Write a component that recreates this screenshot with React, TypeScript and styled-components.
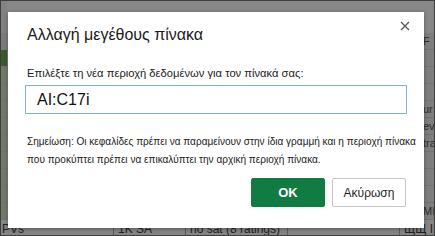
import React from "react";
import styled, { createGlobalStyle } from "styled-components";

const GlobalStyle = createGlobalStyle`
  html, body {
    margin: 0;
    padding: 0;
  }
  body {
    font-family: "Liberation Sans", Arial, sans-serif;
  }
`;

const Screen = styled.div`
  position: relative;
  width: 435px;
  height: 236px;
  box-sizing: border-box;
  border: 1px solid #3e3e3e;
  background: #878787;
  overflow: hidden;
`;

const Sheet = styled.div`
  display: grid;
  grid-template-columns: 6px 1fr 11px;
  grid-template-rows: 32px 17px 17px repeat(9, 17px);
  height: 100%;
`;

const Cell = styled.div<{ $tone?: string; $line?: boolean }>`
  background: ${(p) => p.$tone || "#868686"};
  border-bottom: ${(p) => (p.$line ? "1px solid #727272" : "none")};
  box-sizing: border-box;
  font-size: 11px;
  color: #2a2a2a;
  overflow: hidden;
  white-space: nowrap;
  line-height: 16px;
`;

const BottomRow = styled.div`
  position: absolute;
  left: 0;
  right: 0;
  bottom: 0;
  height: 12px;
  display: grid;
  grid-template-columns: 112px 72px 102px 112px 1fr;
  background: #858585;
  font-size: 12px;
  color: #222;
  line-height: 12px;
`;

const BottomCell = styled.div`
  padding-left: 4px;
  border-left: 1px solid #5a5a5a;
  overflow: hidden;
  white-space: nowrap;
  &:first-child {
    border-left: none;
    padding-left: 1px;
  }
`;

const Dialog = styled.div`
  position: absolute;
  left: 7px;
  top: 11px;
  width: 416px;
  height: 216px;
  box-sizing: border-box;
  background: #ffffff;
  box-shadow: 0 1px 4px rgba(0, 0, 0, 0.35);
  padding: 12px 17px 0 19px;
  display: flex;
  flex-direction: column;
  color: #1f1f1f;
`;

const Close = styled.div`
  position: absolute;
  right: 13px;
  top: 8px;
  width: 12px;
  height: 12px;
  display: flex;
  align-items: center;
  justify-content: center;
`;

const Title = styled.div`
  font-size: 16px;
  line-height: 22px;
  color: #1b1b1b;
`;

const Label = styled.div`
  margin-top: 19px;
  font-size: 11.2px;
  line-height: 16px;
  color: #222;
`;

const Field = styled.div`
  margin: 4px 0 0 -2px;
  height: 29px;
  box-sizing: border-box;
  border: 1px solid #7fb0e0;
  padding-left: 11px;
  display: flex;
  align-items: center;
  font-size: 16px;
  color: #111;
`;

const Note = styled.div`
  margin-top: 19px;
  font-size: 10.05px;
  line-height: 18px;
  color: #222;
  white-space: nowrap;
`;

const Actions = styled.div`
  margin-top: 9px;
  display: flex;
  justify-content: flex-end;
  gap: 7px;
  padding-right: 1px;
`;

const Button = styled.div<{ $primary?: boolean }>`
  width: 74px;
  height: 29px;
  box-sizing: border-box;
  display: flex;
  align-items: center;
  justify-content: center;
  border-radius: 2px;
  font-size: ${(p) => (p.$primary ? "13px" : "12px")};
  font-weight: ${(p) => (p.$primary ? 700 : 400)};
  background: ${(p) => (p.$primary ? "#107c41" : "#ffffff")};
  color: ${(p) => (p.$primary ? "#ffffff" : "#1f1f1f")};
  border: 1px solid ${(p) => (p.$primary ? "#107c41" : "#c6c6c6")};
`;

const leftTones = [
  "#828282",
  "#7b7b7b",
  "#3c5a2c",
  "#6f7a69",
  "#6f7a69",
  "#6f7a69",
  "#6f7a69",
  "#6f7a69",
  "#6f7a69",
  "#6f7a69",
  "#6f7a69",
  "#6f7a69",
];

const rightText = ["", "F", "", "", "", "ur", "ev", "tra", "", "", "", "MI"];

const App: React.FC = () => {
  return (
    <>
      <GlobalStyle />
      <Screen>
        <Sheet>
          {leftTones.map((tone, i) => (
            <React.Fragment key={i}>
              <Cell $tone={tone} $line={i > 1} />
              <Cell $tone={i === 0 ? "#888888" : "#7f7f7f"} $line={i > 0} />
              <Cell $tone={i === 0 ? "#888888" : "#7e7e7e"} $line={i > 0}>
                {rightText[i]}
              </Cell>
            </React.Fragment>
          ))}
        </Sheet>
        <BottomRow>
          <BottomCell>PVs</BottomCell>
          <BottomCell>1K SA</BottomCell>
          <BottomCell>no sat (8 ratings)</BottomCell>
          <BottomCell></BottomCell>
          <BottomCell>ЩЩ INT</BottomCell>
        </BottomRow>
        <Dialog>
          <Close>
            <svg width="10" height="10" viewBox="0 0 10 10">
              <path d="M1 1 L9 9 M9 1 L1 9" stroke="#555" strokeWidth="1.2" />
            </svg>
          </Close>
          <Title>Αλλαγή μεγέθους πίνακα</Title>
          <Label>Επιλέξτε τη νέα περιοχή δεδομένων για τον πίνακά σας:</Label>
          <Field>AI:C17i</Field>
          <Note>
            Σημείωση: Οι κεφαλίδες πρέπει να παραμείνουν στην ίδια γραμμή και η περιοχή πίνακα
            <br />
            που προκύπτει πρέπει να επικαλύπτει την αρχική περιοχή πίνακα.
          </Note>
          <Actions>
            <Button $primary>OK</Button>
            <Button>Ακύρωση</Button>
          </Actions>
        </Dialog>
      </Screen>
    </>
  );
};

export default App;
